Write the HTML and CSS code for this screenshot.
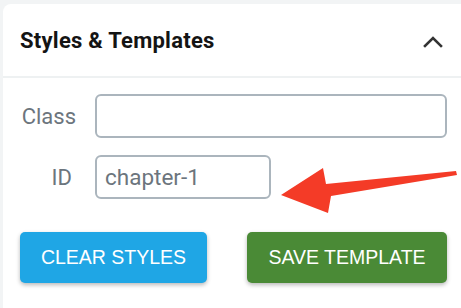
FILE: index.html
```html
<!DOCTYPE html>
<html>
<head>
<meta charset="utf-8">
<link rel="stylesheet" href="styles.css">
</head>
<body>
<div class="card">
  <div class="card-header">
    <span class="title">Styles &amp; Templates</span>
    <svg class="chevron" width="20" height="13" viewBox="0 0 20 13"><polyline points="2,11 10,3 18,11" fill="none" stroke="#333" stroke-width="2.6" stroke-linecap="square"/></svg>
  </div>
  <div class="card-body">
    <div class="form-grid">
      <label class="lbl">Class</label>
      <input class="field field-wide" type="text" value="">
      <label class="lbl lbl-id">ID</label>
      <input class="field field-short" type="text" value="chapter-1">
    </div>
    <div class="actions">
      <button class="btn btn-clear">CLEAR STYLES</button>
      <button class="btn btn-save">SAVE TEMPLATE</button>
    </div>
  </div>
</div>
<svg class="arrow" width="461" height="308" viewBox="0 0 461 308">
  <polygon points="281,195 323,168 326,184 456,171 457,175 331,196 328,213" fill="#f43b27"/>
</svg>
</body>
</html>
```

FILE: styles.css
```css
html, body {
  margin: 0;
  padding: 0;
}
body {
  background: #f2f4f5;
  width: 461px;
  height: 308px;
  overflow: hidden;
  position: relative;
  font-family: Roboto, "Liberation Sans", sans-serif;
}
.card {
  margin: 4px 0 0 3px;
  background: #ffffff;
  border-top-left-radius: 8px;
  height: 304px;
}
.card-header {
  height: 72px;
  display: flex;
  align-items: center;
  justify-content: space-between;
  padding: 0 18px 0 17px;
  border-bottom: 2px solid #eef1f2;
}
.title {
  font-size: 22px;
  font-weight: 700;
  color: #141414;
  letter-spacing: 0.25px;
}
.chevron {
  display: block;
  margin-top: 2px;
}
.card-body {
  padding: 16px 14px 0 17px;
}
.form-grid {
  display: grid;
  grid-template-columns: 56px 1fr;
  column-gap: 19px;
  row-gap: 17px;
  align-items: center;
}
.lbl {
  font-size: 22px;
  color: #6c757d;
  text-align: right;
}
.lbl-id {
  padding-right: 4px;
}
.field {
  box-sizing: border-box;
  height: 44px;
  border: 2px solid #abb5bd;
  border-radius: 6px;
  background: #fff;
  font-family: Roboto, "Liberation Sans", sans-serif;
  font-size: 22.5px;
  color: #6c757d;
  padding: 0 8px;
  outline: none;
}
.field-wide {
  width: 352px;
}
.field-short {
  width: 176px;
}
.actions {
  display: flex;
  gap: 40px;
  margin-top: 33px;
}
.btn {
  height: 51px;
  border: none;
  border-radius: 5px;
  color: #ffffff;
  font-family: "Liberation Sans", Arial, sans-serif;
  font-size: 19.5px;
  box-shadow: 0 2px 4px rgba(0, 0, 0, 0.28);
  padding: 0;
}
.btn-clear {
  width: 187px;
  background: #1fa6e5;
}
.btn-save {
  width: 200px;
  background: #4a8a36;
}
.arrow {
  position: absolute;
  left: 0;
  top: 0;
  pointer-events: none;
}
```
